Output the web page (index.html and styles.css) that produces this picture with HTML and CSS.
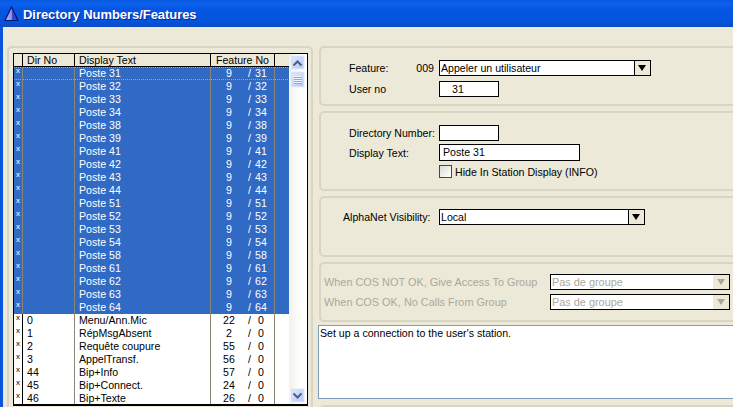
FILE: index.html
```html
<!DOCTYPE html>
<html>
<head>
<meta charset="UTF-8">
<title>Directory Numbers/Features</title>
<link rel="stylesheet" href="styles.css">
</head>
<body>
<div class="window">
  <div class="titlebar">
    <svg class="title-icon" width="15" height="16" viewBox="0 0 15 16">
      <defs>
        <linearGradient id="iconFill" x1="0" y1="0" x2="1" y2="0">
          <stop offset="0" stop-color="#b4c0fa"/>
          <stop offset="0.5" stop-color="#7e90ee"/>
          <stop offset="0.55" stop-color="#3a4ad4"/>
          <stop offset="1" stop-color="#2c38c0"/>
        </linearGradient>
      </defs>
      <path d="M7.5 1 L14 14.5 L1 14.5 Z" fill="url(#iconFill)" stroke="#0c1468" stroke-width="1.2" stroke-linejoin="round"/>
    </svg>
    <span class="title-text">Directory Numbers/Features</span>
  </div>
  <div class="content">
    <div class="list-panel">
      <div class="list-box">
        <div class="list-main">
          <table class="dir-table">
            <colgroup>
              <col class="col-mark"><col class="col-dir"><col class="col-text"><col class="col-feature"><col>
            </colgroup>
            <thead>
              <tr><th></th><th>Dir No</th><th>Display Text</th><th class="center">Feature No</th><th></th></tr>
            </thead>
            <tbody>
              <tr class="selected focused"><td><i>x</i></td><td></td><td>Poste 31</td><td><div class="feat"><span>9</span><b>/</b><em>31</em></div></td><td></td></tr>
              <tr class="selected"><td><i>x</i></td><td></td><td>Poste 32</td><td><div class="feat"><span>9</span><b>/</b><em>32</em></div></td><td></td></tr>
              <tr class="selected"><td><i>x</i></td><td></td><td>Poste 33</td><td><div class="feat"><span>9</span><b>/</b><em>33</em></div></td><td></td></tr>
              <tr class="selected"><td><i>x</i></td><td></td><td>Poste 34</td><td><div class="feat"><span>9</span><b>/</b><em>34</em></div></td><td></td></tr>
              <tr class="selected"><td><i>x</i></td><td></td><td>Poste 38</td><td><div class="feat"><span>9</span><b>/</b><em>38</em></div></td><td></td></tr>
              <tr class="selected"><td><i>x</i></td><td></td><td>Poste 39</td><td><div class="feat"><span>9</span><b>/</b><em>39</em></div></td><td></td></tr>
              <tr class="selected"><td><i>x</i></td><td></td><td>Poste 41</td><td><div class="feat"><span>9</span><b>/</b><em>41</em></div></td><td></td></tr>
              <tr class="selected"><td><i>x</i></td><td></td><td>Poste 42</td><td><div class="feat"><span>9</span><b>/</b><em>42</em></div></td><td></td></tr>
              <tr class="selected"><td><i>x</i></td><td></td><td>Poste 43</td><td><div class="feat"><span>9</span><b>/</b><em>43</em></div></td><td></td></tr>
              <tr class="selected"><td><i>x</i></td><td></td><td>Poste 44</td><td><div class="feat"><span>9</span><b>/</b><em>44</em></div></td><td></td></tr>
              <tr class="selected"><td><i>x</i></td><td></td><td>Poste 51</td><td><div class="feat"><span>9</span><b>/</b><em>51</em></div></td><td></td></tr>
              <tr class="selected"><td><i>x</i></td><td></td><td>Poste 52</td><td><div class="feat"><span>9</span><b>/</b><em>52</em></div></td><td></td></tr>
              <tr class="selected"><td><i>x</i></td><td></td><td>Poste 53</td><td><div class="feat"><span>9</span><b>/</b><em>53</em></div></td><td></td></tr>
              <tr class="selected"><td><i>x</i></td><td></td><td>Poste 54</td><td><div class="feat"><span>9</span><b>/</b><em>54</em></div></td><td></td></tr>
              <tr class="selected"><td><i>x</i></td><td></td><td>Poste 58</td><td><div class="feat"><span>9</span><b>/</b><em>58</em></div></td><td></td></tr>
              <tr class="selected"><td><i>x</i></td><td></td><td>Poste 61</td><td><div class="feat"><span>9</span><b>/</b><em>61</em></div></td><td></td></tr>
              <tr class="selected"><td><i>x</i></td><td></td><td>Poste 62</td><td><div class="feat"><span>9</span><b>/</b><em>62</em></div></td><td></td></tr>
              <tr class="selected"><td><i>x</i></td><td></td><td>Poste 63</td><td><div class="feat"><span>9</span><b>/</b><em>63</em></div></td><td></td></tr>
              <tr class="selected"><td><i>x</i></td><td></td><td>Poste 64</td><td><div class="feat"><span>9</span><b>/</b><em>64</em></div></td><td></td></tr>
              <tr><td><i>x</i></td><td>0</td><td>Menu/Ann.Mic</td><td><div class="feat"><span>22</span><b>/</b><em>0</em></div></td><td></td></tr>
              <tr><td><i>x</i></td><td>1</td><td>RépMsgAbsent</td><td><div class="feat"><span>2</span><b>/</b><em>0</em></div></td><td></td></tr>
              <tr><td><i>x</i></td><td>2</td><td>Requête coupure</td><td><div class="feat"><span>55</span><b>/</b><em>0</em></div></td><td></td></tr>
              <tr><td><i>x</i></td><td>3</td><td>AppelTransf.</td><td><div class="feat"><span>56</span><b>/</b><em>0</em></div></td><td></td></tr>
              <tr><td><i>x</i></td><td>44</td><td>Bip+Info</td><td><div class="feat"><span>57</span><b>/</b><em>0</em></div></td><td></td></tr>
              <tr><td><i>x</i></td><td>45</td><td>Bip+Connect.</td><td><div class="feat"><span>24</span><b>/</b><em>0</em></div></td><td></td></tr>
              <tr><td><i>x</i></td><td>46</td><td>Bip+Texte</td><td><div class="feat"><span>26</span><b>/</b><em>0</em></div></td><td></td></tr>
            </tbody>
          </table>
        </div>
        <div class="scrollbar">
          <div class="scroll-btn">
            <svg width="11" height="8" viewBox="0 0 11 8"><path d="M1.5 6.5 L5.5 2.5 L9.5 6.5" fill="none" stroke="#4d6185" stroke-width="2"/></svg>
          </div>
          <div class="scroll-thumb">
            <svg width="8" height="8" viewBox="0 0 8 8"><path d="M0 .5H8M0 2.5H8M0 4.5H8M0 6.5H8" stroke="#eef4fe" stroke-width="1"/><path d="M0 1.5H8M0 3.5H8M0 5.5H8M0 7.5H8" stroke="#8ca8e0" stroke-width="1"/></svg>
          </div>
          <div class="scroll-track"></div>
          <div class="scroll-btn">
            <svg width="11" height="8" viewBox="0 0 11 8"><path d="M1.5 1.5 L5.5 5.5 L9.5 1.5" fill="none" stroke="#4d6185" stroke-width="2"/></svg>
          </div>
        </div>
      </div>
    </div>
    <div class="side">
      <div class="panel panel-feature">
        <div class="field">
          <label class="field-label">Feature:<span class="code">009</span></label>
          <div class="combo combo-feature"><span class="combo-value">Appeler un utilisateur</span><span class="combo-arrow"></span></div>
        </div>
        <div class="field">
          <label class="field-label">User no</label>
          <div class="input input-short input-center">31</div>
        </div>
      </div>
      <div class="panel panel-dir">
        <div class="field">
          <label class="field-label">Directory Number:</label>
          <div class="input input-short"></div>
        </div>
        <div class="field">
          <label class="field-label">Display Text:</label>
          <div class="input input-long">Poste 31</div>
        </div>
        <div class="check-row"><span class="checkbox"></span>Hide In Station Display (INFO)</div>
      </div>
      <div class="panel panel-alpha">
        <div class="field">
          <label class="field-label alpha-label">AlphaNet Visibility:</label>
          <div class="combo combo-alpha"><span class="combo-value">Local</span><span class="combo-arrow"></span></div>
        </div>
      </div>
      <div class="panel panel-cos">
        <div class="cos-row">
          <label class="cos-label">When COS NOT OK, Give Access To Group</label>
          <div class="combo combo-cos"><span class="combo-value">Pas de groupe</span><span class="combo-arrow"></span></div>
        </div>
        <div class="cos-row">
          <label class="cos-label">When COS OK, No Calls From Group</label>
          <div class="combo combo-cos"><span class="combo-value">Pas de groupe</span><span class="combo-arrow"></span></div>
        </div>
      </div>
      <div class="help-text">Set up a connection to the user's station.</div>
      <div class="panel panel-last"></div>
    </div>
  </div>
</div>
</body>
</html>
```
FILE: styles.css
```css
html, body {
  margin: 0;
  padding: 0;
  height: 407px;
  overflow: hidden;
}

body {
  font-family: "Liberation Sans", Arial, sans-serif;
  font-size: 10.6px;
  color: #000;
  background-color: #ece9d8;
}

.window {
  height: 407px;
  display: flex;
  flex-direction: column;
  overflow: hidden;
}

.titlebar {
  height: 27px;
  flex: none;
  display: flex;
  align-items: center;
  padding-left: 4px;
  background: linear-gradient(#0a58dc 0, #0a61ee 12%, #0556e2 35%, #0353dc 80%, #0a4cc4 100%);
}

.title-icon {
  margin-right: 4px;
  margin-top: 1px;
}

.title-text {
  color: #fff;
  font-size: 13px;
  font-weight: 700;
  letter-spacing: -0.05px;
  text-shadow: 1px 1px 0 #0a2a90;
  margin-top: 1px;
}

.content {
  flex: 1;
  display: flex;
  border-left: 3px solid #0a55dd;
  padding: 19px 0 0 4px;
}

.list-panel {
  width: 306px;
  height: 370px;
  box-sizing: border-box;
  flex: none;
  border: 2px solid #d8d5c4;
  border-radius: 5px;
  padding: 5px 0 0 4px;
}

.list-box {
  width: 295px;
  height: 353px;
  box-sizing: border-box;
  border: 1px solid #000;
  border-width: 1px 1px 2px 1px;
  background-color: #fff;
  display: flex;
}

.list-main {
  width: 275px;
  flex: none;
  overflow: hidden;
}

.dir-table {
  width: 275px;
  table-layout: fixed;
  border-collapse: separate;
  border-spacing: 0;
}

.col-mark { width: 9px; }
.col-dir { width: 52px; }
.col-text { width: 136px; }
.col-feature { width: 64px; }

.dir-table th {
  height: 12px;
  padding: 0 0 0 4px;
  font-weight: normal;
  text-align: left;
  line-height: 12px;
  background-color: #ece9d8;
  border-right: 1px solid #000;
  border-bottom: 1px solid #000;
  white-space: nowrap;
  overflow: hidden;
}

.dir-table th.center {
  text-align: center;
  padding: 0;
}

.dir-table th:last-child {
  border-right: none;
}

.dir-table td {
  height: 13px;
  padding: 0 0 0 4px;
  line-height: 13px;
  border-right: 1px solid #8a8578;
  white-space: nowrap;
  overflow: hidden;
}

.dir-table td:first-child {
  padding: 0;
  border-right: 1px solid #000;
  background-color: #fff;
  vertical-align: top;
}

.dir-table td:last-child {
  border-right: none;
}

.dir-table i {
  display: block;
  font-style: normal;
  font-size: 8px;
  line-height: 8px;
  padding-left: 2px;
}

.selected td {
  background-color: #316ac5;
  color: #fff;
}

.dir-table .selected td:first-child {
  background-color: #316ac5;
  color: #fff;
  border-right-color: #8a8578;
}

.focused td {
  background-image: linear-gradient(90deg, #d89a50 50%, transparent 50%), linear-gradient(90deg, #d89a50 50%, transparent 50%);
  background-size: 2px 1px, 2px 1px;
  background-position: 0 0, 0 100%;
  background-repeat: repeat-x;
}

.feat {
  display: flex;
  margin-left: -4px;
  padding-left: 6px;
}

.feat span {
  width: 24px;
  text-align: center;
}

.feat b {
  font-weight: normal;
  width: 5px;
  margin-left: 7px;
}

.feat em {
  font-style: normal;
  width: 16px;
  text-align: center;
}

.scrollbar {
  width: 17px;
  box-sizing: border-box;
  flex: none;
  display: flex;
  flex-direction: column;
  background: linear-gradient(90deg, #f3f1ec, #fdfdfa 60%, #fff);
  padding: 1px;
}

.scroll-btn, .scroll-thumb {
  box-sizing: border-box;
  border: 1px solid #eef3fe;
  border-radius: 2px;
  background: linear-gradient(135deg, #e1eafe, #b4c8f6);
  display: flex;
  align-items: center;
  justify-content: center;
  box-shadow: 0 0 0 1px #d4dff8 inset;
}

.scroll-btn {
  height: 15px;
}

.scroll-thumb {
  height: 17px;
  margin-top: 1px;
}

.scroll-track {
  flex: 1;
}

.side {
  flex: 1;
  min-width: 0;
  margin-left: 6px;
  display: flex;
  flex-direction: column;
  margin-right: -6px;
}

.panel {
  flex: none;
  box-sizing: border-box;
  border: 2px solid #d8d5c4;
  border-radius: 5px;
}

.panel-feature {
  height: 60px;
  padding-top: 12px;
  margin-bottom: 5px;
}

.panel-dir {
  height: 80px;
  padding-top: 12px;
  margin-bottom: 5px;
}

.panel-alpha {
  height: 61px;
  padding-top: 11px;
  margin-bottom: 5px;
}

.panel-cos {
  height: 60px;
  padding: 10px 0 0 3px;
  color: #aca899;
  font-size: 10.9px;
  margin-bottom: 3px;
}

.panel-last {
  height: 30px;
  margin-top: 6px;
}

.field {
  display: flex;
  align-items: center;
  margin-bottom: 5px;
}

.panel-dir .field {
  margin-bottom: 3px;
}

.field-label {
  display: flex;
  width: 90px;
  padding-left: 28px;
  flex: none;
  white-space: nowrap;
}

.alpha-label {
  padding-left: 22px;
  width: 96px;
}

.code {
  margin-left: auto;
  margin-right: 5px;
}

.input {
  box-sizing: border-box;
  height: 16px;
  line-height: 14px;
  border: 1px solid #000;
  background-color: #fff;
  padding-left: 3px;
}

.input-short { width: 60px; }
.input-long { width: 141px; height: 17px; }
.input-center { padding-left: 12px; }

.check-row {
  display: flex;
  align-items: center;
  padding-left: 118px;
  margin-top: 4px;
}

.checkbox {
  box-sizing: border-box;
  width: 13px;
  height: 13px;
  margin-right: 3px;
  border: 1px solid #1c5180;
  background: linear-gradient(135deg, #dcdcd7, #fff);
}

.combo {
  box-sizing: border-box;
  height: 16px;
  display: flex;
  border: 1px solid #000;
  background-color: #fff;
  line-height: 14px;
}

.combo-feature { width: 212px; }
.combo-alpha { width: 206px; }
.combo-cos { width: 180px; color: #aca899; border-color: #000; }

.combo-value {
  flex: 1;
  padding-left: 1px;
  white-space: nowrap;
}

.combo-arrow {
  width: 15px;
  border-left: 1px solid #000;
  background-color: #ece9d8;
  position: relative;
}

.combo-arrow::after {
  content: "";
  position: absolute;
  left: 3px;
  top: 4px;
  border-left: 4px solid transparent;
  border-right: 4px solid transparent;
  border-top: 6px solid #000;
}

.combo-cos .combo-arrow {
  border-left-color: #ece9d8;
}

.combo-cos .combo-arrow::after {
  border-top-color: #aca899;
}

.cos-row {
  display: flex;
  align-items: center;
  height: 16px;
  margin-bottom: 4px;
}

.cos-label {
  width: 226px;
  flex: none;
  white-space: nowrap;
}

.help-text {
  flex: none;
  box-sizing: border-box;
  height: 74px;
  margin-left: -1px;
  border: 1px solid #7f9db9;
  background-color: #fff;
  padding: 1px 2px 1px 1px;
  line-height: 13px;
}
```
